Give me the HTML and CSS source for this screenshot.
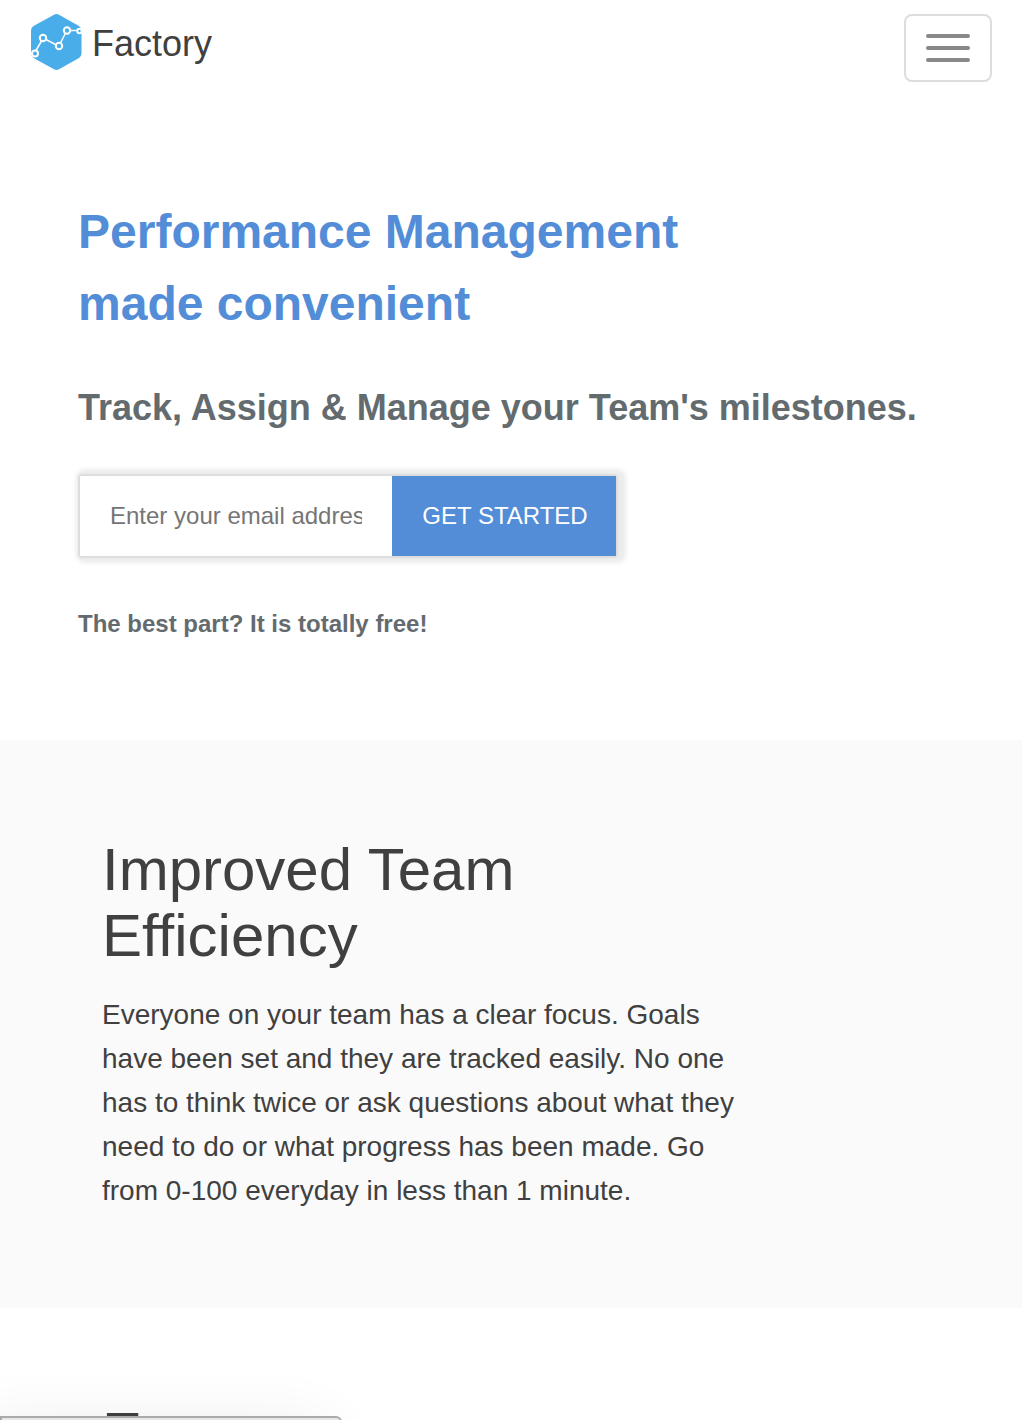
FILE: index.html
```html
<!DOCTYPE html>
<html lang="en">
<head>
  <meta charset="utf-8">
  <meta name="viewport" content="width=device-width, initial-scale=1">
  <title>Factory</title>
  <link rel="stylesheet" href="styles.css">
</head>
<body>
  <header class="navbar">
    <a class="brand" href="#">
      <svg class="brand-logo" viewBox="0 0 52 56" aria-hidden="true">
        <path fill="#48ade9" d="M24 .8Q26.500-.6 29 .8L49 12Q51.500 13.500 51.500 16.500V39.500Q51.500 42.500 49 44L29 55.200Q26.500 56.600 24 55.200L3.500 44Q1 42.500 1 39.500V16.500Q1 13.500 3.500 12Z"/>
        <g fill="none" stroke="#fff">
          <path stroke-width="1.500" d="M6 36.500 11.500 27M16 25.500 25.500 30.500M30.500 29 35 20M40.500 16.500H46.500"/>
          <g fill="#48ade9" stroke-width="2">
            <circle cx="5" cy="39.500" r="3"/>
            <circle cx="13" cy="24" r="3.200"/>
            <circle cx="29" cy="32" r="3.200"/>
            <circle cx="37" cy="16.500" r="3.200"/>
            <circle cx="49.500" cy="17" r="2.200"/>
          </g>
        </g>
      </svg>
      <span class="brand-name">Factory</span>
    </a>
    <button class="nav-toggle" type="button" aria-label="Toggle navigation">
      <span class="nav-toggle-bar"></span>
      <span class="nav-toggle-bar"></span>
      <span class="nav-toggle-bar"></span>
    </button>
  </header>

  <main>
    <section class="hero">
      <h1 class="hero-title">Performance Management<br>made convenient</h1>
      <p class="hero-lead">Track, Assign &amp; Manage your Team's milestones.</p>
      <form class="signup">
        <input class="signup-email" type="email" placeholder="Enter your email address" aria-label="Email address">
        <button class="signup-button" type="submit">GET STARTED</button>
      </form>
      <p class="hero-note">The best part? It is totally free!</p>
    </section>

    <section class="feature feature-shaded">
      <h2 class="feature-title">Improved Team Efficiency</h2>
      <p class="feature-text">Everyone on your team has a clear focus. Goals have been set and they are tracked easily. No one has to think twice or ask questions about what they need to do or what progress has been made. Go from 0-100 everyday in less than 1 minute.</p>
    </section>

    <section class="feature">
      <h2 class="feature-title">E</h2>
    </section>
  </main>

  <div class="status-bar"></div>
</body>
</html>
```
FILE: styles.css
```css
* {
  box-sizing: border-box;
}

body {
  height: 100vh;
  margin: 0;
  overflow: hidden;
  background: #fff;
  color: #404040;
  font-family: "Liberation Sans", Arial, sans-serif;
}

h1,
h2,
p {
  margin: 0;
}

.navbar {
  display: flex;
  justify-content: space-between;
  align-items: flex-start;
  padding: 14px 30px;
}

.brand {
  display: flex;
  align-items: flex-start;
  gap: 10px;
  color: #404040;
  font-size: 36px;
  line-height: 60px;
  text-decoration: none;
}

.brand-logo {
  width: 52px;
  height: 56px;
}

.nav-toggle {
  display: flex;
  flex-direction: column;
  gap: 8px;
  padding: 18px 20px;
  border: 2px solid #ddd;
  border-radius: 8px;
  background: transparent;
}

.nav-toggle-bar {
  width: 44px;
  height: 4px;
  border-radius: 2px;
  background: #888;
}

.hero {
  padding: 100px 78px 98px;
}

.hero-title {
  color: #538dd7;
  font-size: 48px;
  line-height: 72px;
}

.hero-lead {
  margin-top: 40px;
  color: #636b6f;
  font-size: 36px;
  font-weight: bold;
  line-height: 56px;
}

.signup {
  display: flex;
  width: fit-content;
  margin-top: 38px;
  border: 2px solid #ddd;
  border-radius: 4px;
  box-shadow: 3px 0 4px 5px rgba(0, 0, 0, 0.08);
}

.signup-email {
  width: 312px;
  height: 80px;
  padding: 0 30px;
  border: 0;
  background: #fff;
  color: #404040;
  font: inherit;
  font-size: 24px;
}

.signup-email::placeholder {
  color: #757575;
}

.signup-button {
  height: 80px;
  padding: 0 28px 0 30px;
  width: 224px;
  border: 0;
  background: #538dd7;
  color: #fff;
  font: inherit;
  font-size: 24px;
}

.hero-note {
  margin-top: 48px;
  color: #636b6f;
  font-size: 24px;
  font-weight: bold;
  line-height: 36px;
}

.feature {
  padding: 93px 102px;
}

.feature-shaded {
  padding: 97px 102px 95px;
  background: #fafafa;
}

.feature-title {
  max-width: 480px;
  font-size: 60px;
  font-weight: normal;
  line-height: 66px;
}

.feature-text {
  max-width: 640px;
  margin-top: 24px;
  font-size: 28px;
  line-height: 44px;
}

/* Browser-style link hint tucked into the bottom-left corner */
.status-bar {
  position: fixed;
  bottom: -40px;
  left: 0;
  width: 342px;
  height: 44px;
  border: 2px solid #aaa;
  border-top-right-radius: 6px;
  background: #e8e8e8;
  box-shadow: -20px 20px 70px rgba(0, 0, 0, 0.12);
}
```
